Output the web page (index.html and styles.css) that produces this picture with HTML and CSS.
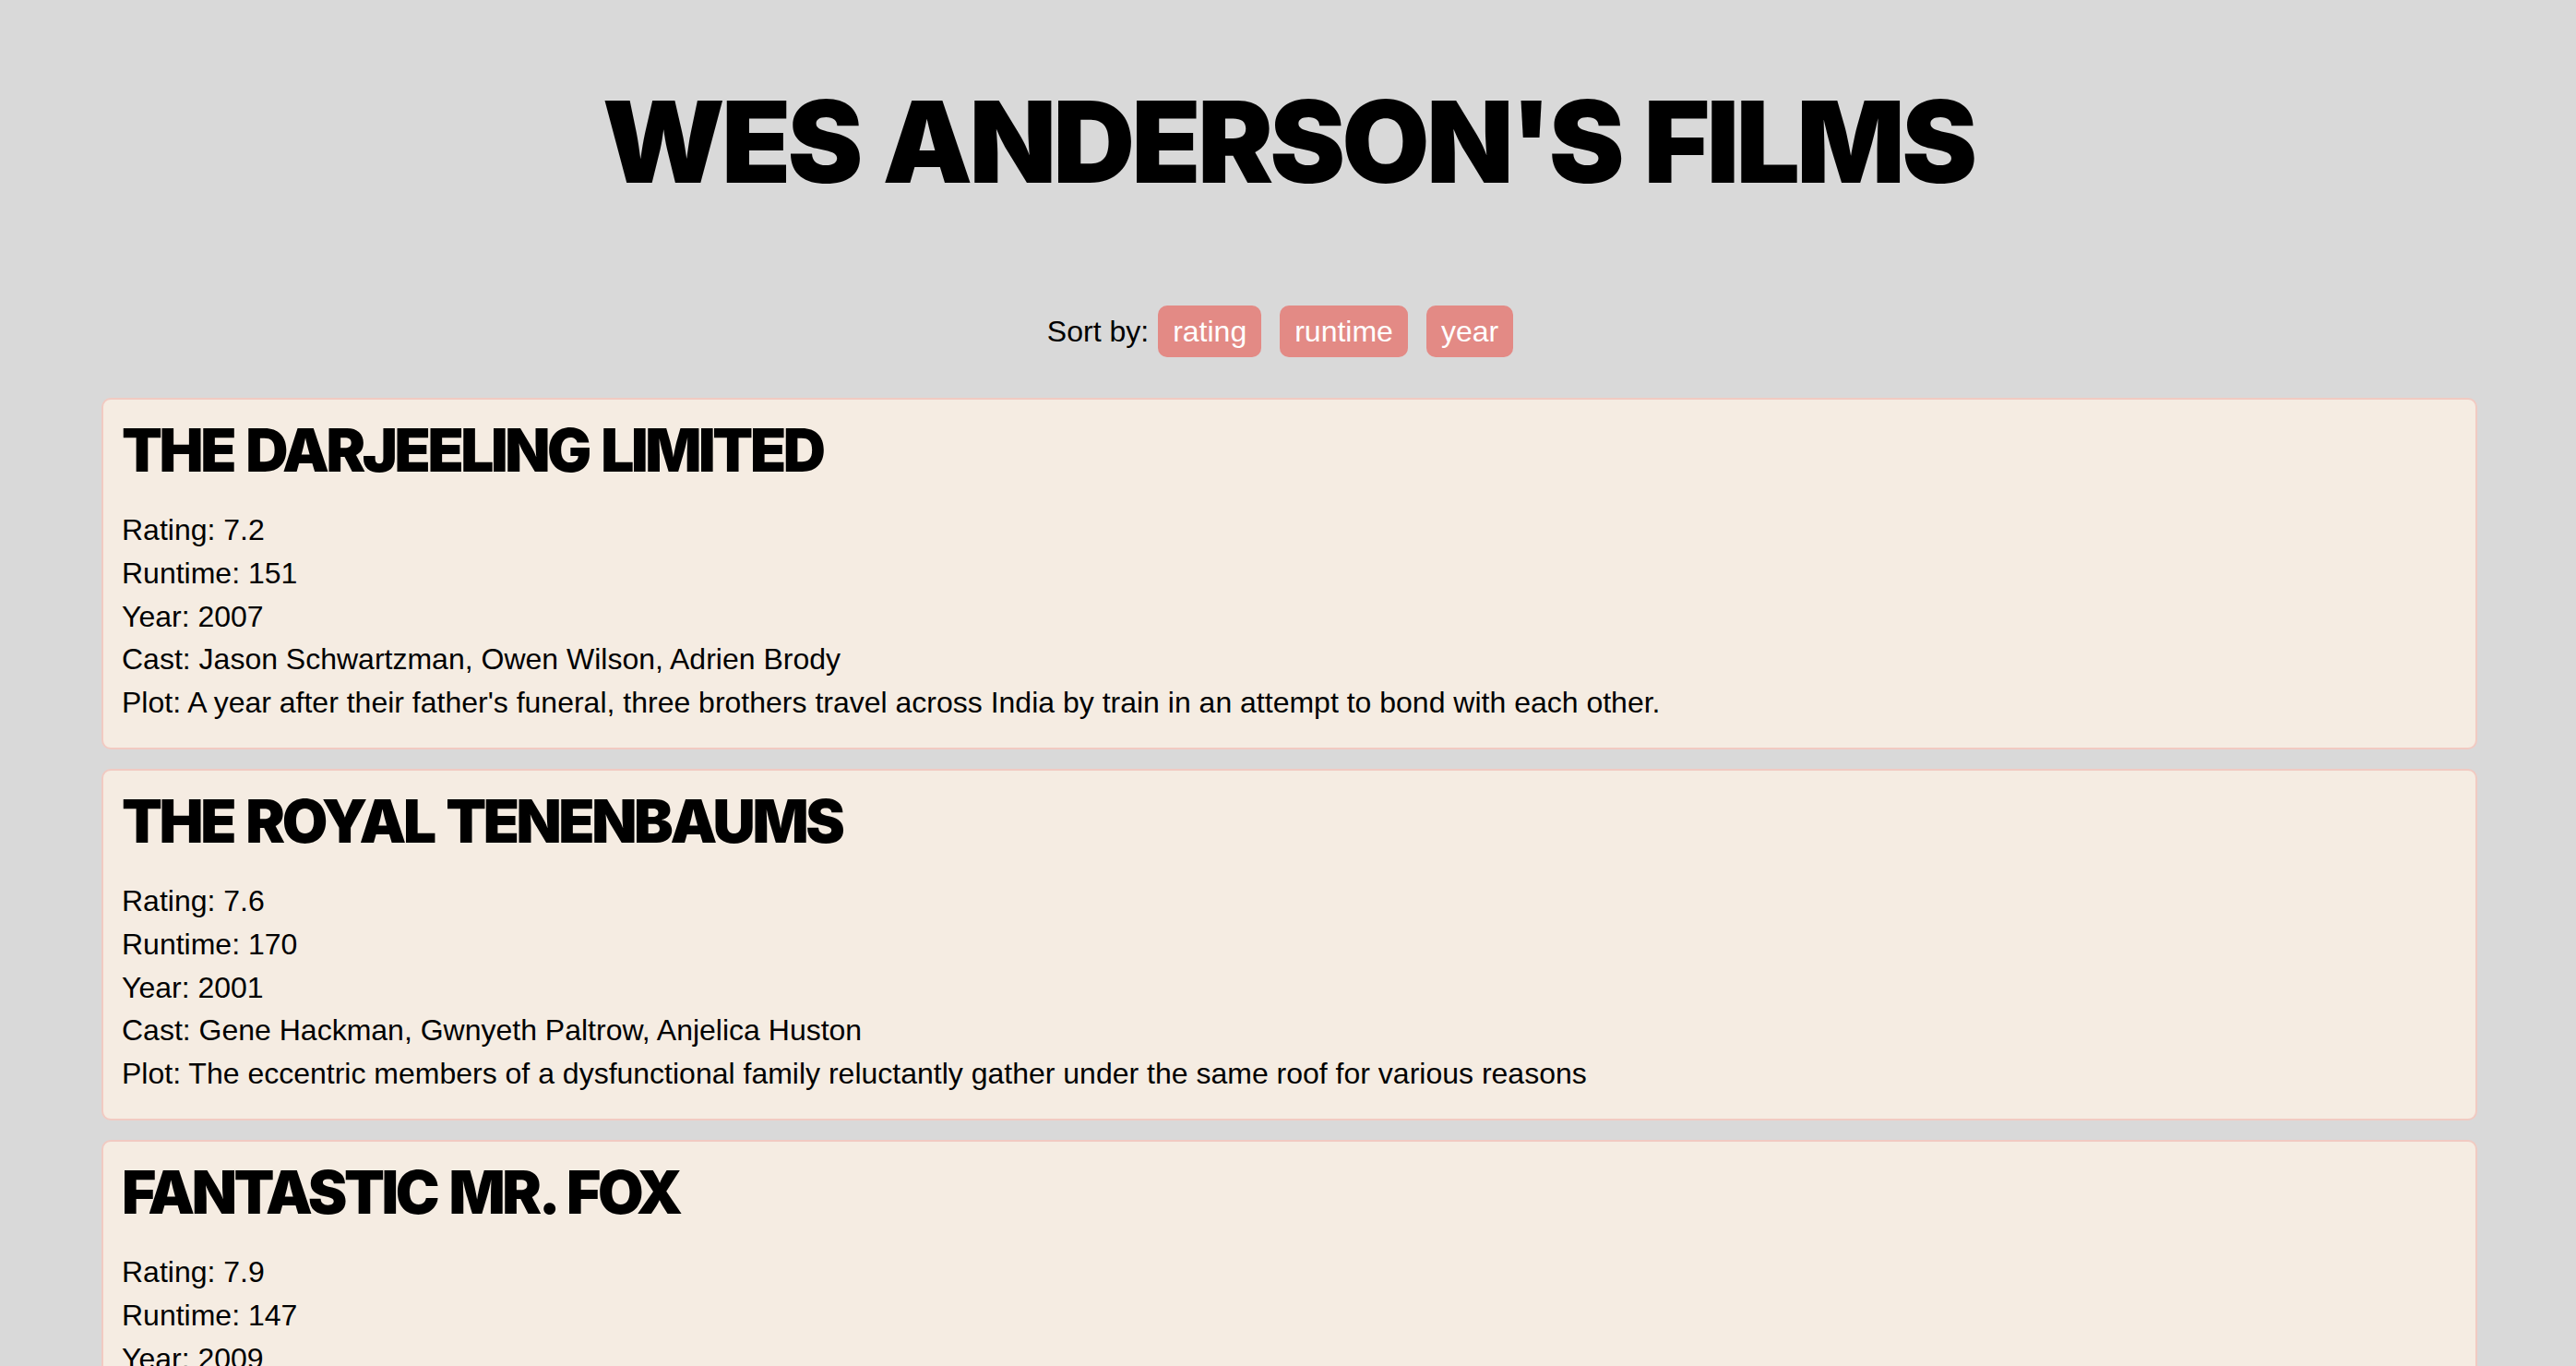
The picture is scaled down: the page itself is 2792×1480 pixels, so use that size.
FILE: index.html
```html
<!DOCTYPE html>
<html lang="en">
<head>
<meta charset="utf-8">
<title>Wes Anderson's Films</title>
<link rel="stylesheet" href="styles.css">
</head>
<body>
  <h1 class="page-title">WES ANDERSON'S FILMS</h1>
  <div class="sort-bar">
    <span class="sort-label">Sort by:</span>
    <button class="sort-btn">rating</button>
    <button class="sort-btn">runtime</button>
    <button class="sort-btn">year</button>
  </div>
  <div class="film-list">
    <div class="film-card">
      <h2 class="film-title">THE DARJEELING LIMITED</h2>
      <div class="film-row">Rating: 7.2</div>
      <div class="film-row">Runtime: 151</div>
      <div class="film-row">Year: 2007</div>
      <div class="film-row">Cast: Jason Schwartzman, Owen Wilson, Adrien Brody</div>
      <div class="film-row">Plot: A year after their father's funeral, three brothers travel across India by train in an attempt to bond with each other.</div>
    </div>
    <div class="film-card">
      <h2 class="film-title">THE ROYAL TENENBAUMS</h2>
      <div class="film-row">Rating: 7.6</div>
      <div class="film-row">Runtime: 170</div>
      <div class="film-row">Year: 2001</div>
      <div class="film-row">Cast: Gene Hackman, Gwnyeth Paltrow, Anjelica Huston</div>
      <div class="film-row">Plot: The eccentric members of a dysfunctional family reluctantly gather under the same roof for various reasons</div>
    </div>
    <div class="film-card">
      <h2 class="film-title">FANTASTIC MR. FOX</h2>
      <div class="film-row">Rating: 7.9</div>
      <div class="film-row">Runtime: 147</div>
      <div class="film-row">Year: 2009</div>
      <div class="film-row">Cast: George Clooney, Meryl Streep, Bill Murray</div>
      <div class="film-row">Plot: An urbane fox cannot resist returning to his farm raiding ways and then must help his community survive the farmers' retaliation.</div>
    </div>
  </div>
</body>
</html>
```

FILE: styles.css
```css
html, body {
  margin: 0;
  padding: 0;
}

body {
  background: #d9d9d9;
  color: #000;
  font-family: "Liberation Sans", Arial, sans-serif;
  font-size: 32px;
}

.page-title {
  margin: 79px 0 0;
  font-family: "Inter", "Roboto", "Liberation Sans", sans-serif;
  font-weight: 900;
  font-size: 123px;
  line-height: 150px;
  text-align: center;
  letter-spacing: -3.8px;
  word-spacing: 4px;
}

.sort-bar {
  display: flex;
  justify-content: center;
  align-items: center;
  margin-top: 102px;
  padding-right: 17px;
}

.sort-label {
  margin-right: 10px;
  line-height: 36px;
}

.sort-btn {
  font-family: "Liberation Sans", Arial, sans-serif;
  font-size: 32px;
  line-height: 36px;
  padding: 10px 16px;
  border: 0;
  border-radius: 10px;
  background: #e38a85;
  color: #fff;
}

.sort-btn + .sort-btn {
  margin-left: 20px;
}

.film-list {
  margin: 44px 107px 0 110px;
}

.film-card {
  background: #f5ece2;
  border: 2px solid #f1cac2;
  border-radius: 10px;
  padding: 20px;
  margin-bottom: 21px;
}

.film-title {
  margin: 0 0 33px;
  font-family: "Inter", "Roboto", "Liberation Sans", sans-serif;
  font-weight: 900;
  font-size: 64px;
  line-height: 70px;
  letter-spacing: -3.4px;
  word-spacing: 4px;
}

.film-row {
  line-height: 36.8px;
  margin-bottom: 10px;
}
```
